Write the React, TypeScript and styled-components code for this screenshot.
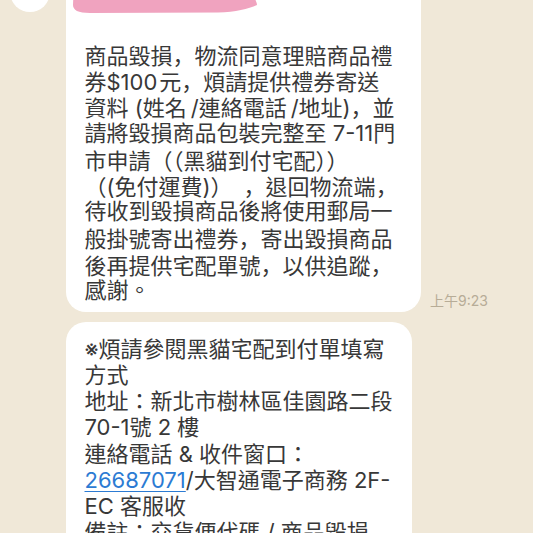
import React from "react";
import styled, { createGlobalStyle } from "styled-components";

const Global = createGlobalStyle`
  html, body { margin: 0; padding: 0; }
  body { background: #f0e8d8; }
`;

const Page = styled.div`
  width: 533px;
  height: 533px;
  overflow: hidden;
  background: #f0e8d8;
  font-family: "Inter", "Noto Sans CJK TC", "Noto Sans", sans-serif;
`;

const Thread = styled.div`
  display: flex;
  flex-direction: column;
  margin-top: -28px;
  padding-left: 10px;
`;

const MessageRow = styled.div`
  display: flex;
  align-items: flex-start;
  gap: 16px;
`;

const Avatar = styled.div`
  width: 40px;
  height: 40px;
  border-radius: 50%;
  background: #ffffff;
  flex: none;
`;

const Column = styled.div`
  display: flex;
  flex-direction: column;
  gap: 10px;
  padding-top: 8px;
`;

const BubbleRow = styled.div`
  display: flex;
  align-items: flex-end;
  gap: 9px;
`;

const Bubble = styled.div<{ $w: number; $pt: number; $pb: number; $lh: number }>`
  --lh: ${(p) => p.$lh}px;
  box-sizing: border-box;
  width: ${(p) => p.$w}px;
  background: #ffffff;
  border-radius: 20px;
  padding: ${(p) => p.$pt}px 10px ${(p) => p.$pb}px 18.5px;
  color: #383838;
  font-size: 22px;
  line-height: ${(p) => p.$lh}px;
`;

const Scribble = styled.svg`
  display: block;
  margin-left: -17px;
`;

const Text = styled.div<{ $mt?: number }>`
  margin-top: ${(p) => p.$mt ?? 0}px;
`;

const Line = styled.div`
  height: var(--lh);
  white-space: nowrap;
`;

const Punct = styled.span`
  font-family: "Noto Sans CJK SC", "Noto Sans CJK TC", sans-serif;
`;

const Link = styled.span`
  color: #2c7bd3;
  text-decoration: underline;
  text-decoration-thickness: 1px;
  text-underline-offset: 3px;
`;

const Time = styled.div`
  font-size: 14px;
  line-height: 16px;
  color: #b7ac97;
  margin-bottom: 3px;
  white-space: nowrap;
`;

function T({ s }: { s: string }) {
  const parts: React.ReactNode[] = [];
  let buf = "";
  let k = 0;
  for (const ch of s) {
    if ("，（）".includes(ch)) {
      if (buf) parts.push(buf);
      buf = "";
      parts.push(<Punct key={k++}>{ch}</Punct>);
    } else {
      buf += ch;
    }
  }
  if (buf) parts.push(buf);
  return <>{parts}</>;
}

const first = [
  "商品毀損，物流同意理賠商品禮",
  "券$100\u200a元，煩請提供禮券寄送",
  "資料 (姓名\u2009/連絡電話\u2009/地址)，並",
  "請將毀損商品包裝完整至 7-11門",
  "市申請（（黑貓到付宅配））",
  "（(免付運費)）\u2002，退回物流端，",
  "待收到毀損商品後將使用郵局一",
  "般掛號寄出禮券，寄出毀損商品",
  "後再提供宅配單號，以供追蹤，",
  "感謝。",
];

export default function App() {
  return (
    <>
      <Global />
      <Page>
        <Thread>
          <MessageRow>
            <Avatar />
            <Column>
              <BubbleRow>
                <Bubble $w={355} $pt={0} $pb={9} $lh={26.2}>
                  <Scribble width="200" height="33" viewBox="0 0 200 33">
                    <defs>
                      <filter id="soft">
                        <feGaussianBlur stdDeviation="0.6" />
                      </filter>
                    </defs>
                    <path
                      d="M6 0 L178 0 C181 10 189 20 189 25 C180 29 168 32 150 32.5 L22 33 C10 33 5 30 5 25 Z"
                      fill="#f0a3bf"
                      filter="url(#soft)"
                    />
                  </Scribble>
                  <Text $mt={28}>
                    {first.map((l, i) => (
                      <Line key={i}>
                        <T s={l} />
                      </Line>
                    ))}
                  </Text>
                </Bubble>
                <Time>上午9:23</Time>
              </BubbleRow>
              <BubbleRow>
                <Bubble $w={346} $pt={14} $pb={10} $lh={26.2}>
                  <Text>
                    <Line>※煩請參閱黑貓宅配到付單填寫</Line>
                    <Line>方式</Line>
                    <Line>地址：新北市樹林區佳園路二段</Line>
                    <Line>70-1號 2 樓</Line>
                    <Line>連絡電話 &amp; 收件窗口：</Line>
                    <Line>
                      <Link>26687071</Link>/大智通電子商務 2F-
                    </Line>
                    <Line>EC 客服收</Line>
                    <Line>備註：交貨便代碼 / 商品毀損</Line>
                    <Line>&nbsp;</Line>
                  </Text>
                </Bubble>
              </BubbleRow>
            </Column>
          </MessageRow>
        </Thread>
      </Page>
    </>
  );
}
